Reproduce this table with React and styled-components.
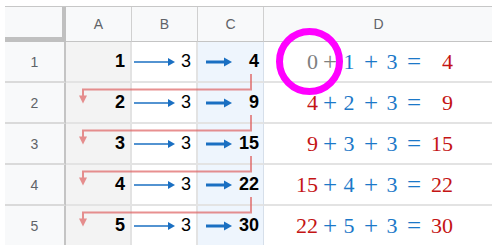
import React from "react";
import styled, { createGlobalStyle } from "styled-components";

const GlobalStyle = createGlobalStyle`
  html, body { margin: 0; padding: 0; background: #ffffff; }
  body { font-family: "Liberation Sans", Arial, sans-serif; }
`;

const Sheet = styled.div`
  position: relative;
  width: 492px;
  height: 249px;
  padding: 6px 0 0 5px;
  box-sizing: border-box;
  overflow: hidden;
`;

const Grid = styled.div`
  display: grid;
  grid-template-columns: 61px 66px 66px 66px 229px;
  grid-template-rows: 35px repeat(4, 41px) 39px;
  border-top: 1px solid #c7c7c7;
`;

const Corner = styled.div`
  background: #f8f9fa;
  border-right: 4px solid #c0c0c0;
  border-bottom: 5px solid #c0c0c0;
  box-sizing: border-box;
`;

const ColHeader = styled.div`
  display: flex;
  align-items: center;
  justify-content: center;
  background: #f8f9fa;
  color: #5f6368;
  font-size: 14px;
  border-bottom: 1px solid #c4c4c4;
  border-right: ${(p) => (p.$last ? "none" : "1px solid #d0d0d0")};
  box-sizing: border-box;
`;

const RowHeader = styled.div`
  display: flex;
  align-items: center;
  justify-content: center;
  background: #f8f9fa;
  color: #5f6368;
  font-size: 14px;
  border-right: 2px solid #c4c4c4;
  border-bottom: ${(p) => (p.$last ? "none" : "2px solid #dadada")};
  box-sizing: border-box;
`;

const Cell = styled.div`
  display: flex;
  align-items: center;
  justify-content: ${(p) => (p.$split ? "space-between" : "flex-end")};
  padding: 0 ${(p) => p.$pr || 5}px 0 ${(p) => p.$pl || 0}px;
  background: ${(p) => p.$bg || "#ffffff"};
  border-right: ${(p) => p.$br || "none"};
  border-bottom: ${(p) => (p.$last ? "none" : "2px solid #e3e3e3")};
  box-sizing: border-box;
  color: #000;
  font-size: 18px;
  font-weight: ${(p) => (p.$bold ? 700 : 400)};
`;

const Formula = styled.div`
  display: grid;
  grid-template-columns: 23px 24px 14px 30px 12px 32px 23px;
  align-items: center;
  padding-left: 31px;
  background: #ffffff;
  border-bottom: ${(p) => (p.$last ? "none" : "2px solid #e3e3e3")};
  box-sizing: border-box;
  font-family: "Liberation Serif", "Times New Roman", serif;
  font-size: 22px;
`;

const tones = { gray: "#808080", blue: "#1c78c8", red: "#c41414" };

const Token = styled.span`
  color: ${(p) => tones[p.$tone]};
  justify-self: ${(p) => (p.$end ? "end" : "center")};
  font-size: ${(p) => (p.$op ? "25px" : "22px")};
  line-height: 1;
`;

const Overlay = styled.svg`
  position: absolute;
  top: 0;
  left: 0;
  pointer-events: none;
`;

const ThinArrow = () => (
  <svg width="41" height="10" viewBox="0 0 41 10">
    <line x1="0" y1="5" x2="35" y2="5" stroke="#1a6fc2" strokeWidth="1.5" />
    <polygon points="34,1 41,5 34,9" fill="#1a6fc2" />
  </svg>
);

const ThickArrow = () => (
  <svg width="26" height="10" viewBox="0 0 26 10">
    <line x1="0" y1="5" x2="19" y2="5" stroke="#1a6fc2" strokeWidth="3" />
    <polygon points="18,0.5 26,5 18,9.5" fill="#1a6fc2" />
  </svg>
);

const rows = [
  { n: 1, a: 1, c: 4, f: [0, 1, 3, 4] },
  { n: 2, a: 2, c: 9, f: [4, 2, 3, 9] },
  { n: 3, a: 3, c: 15, f: [9, 3, 3, 15] },
  { n: 4, a: 4, c: 22, f: [15, 4, 3, 22] },
  { n: 5, a: 5, c: 30, f: [22, 5, 3, 30] },
];

export default function App() {
  const connectors = [0, 1, 2, 3].map((i) => {
    const top = 41 + 41 * i;
    const center = top + 20.5;
    const hy = top + 41 + 7.5;
    return { y0: center + 12.5, hy, tip: hy + 14 };
  });

  return (
    <>
      <GlobalStyle />
      <Sheet>
        <Grid>
          <Corner />
          <ColHeader>A</ColHeader>
          <ColHeader>B</ColHeader>
          <ColHeader>C</ColHeader>
          <ColHeader $last>D</ColHeader>
          {rows.map((r, i) => {
            const last = i === rows.length - 1;
            const first = i === 0;
            return (
              <React.Fragment key={r.n}>
                <RowHeader $last={last}>{r.n}</RowHeader>
                <Cell $bold $bg="#f3f3f3" $br="2px solid #e3e3e3" $last={last}>
                  {r.a}
                </Cell>
                <Cell $split $pl={2} $br="2px solid #e3e3e3" $last={last}>
                  <ThinArrow />
                  <span>3</span>
                </Cell>
                <Cell
                  $split
                  $bold
                  $pl={8}
                  $pr={4}
                  $bg="#eef5fd"
                  $br="1px solid #d6dfea"
                  $last={last}
                >
                  <ThickArrow />
                  <span>{r.c}</span>
                </Cell>
                <Formula $last={last}>
                  <Token $end $tone={first ? "gray" : "red"}>{r.f[0]}</Token>
                  <Token $op $tone={first ? "gray" : "blue"}>+</Token>
                  <Token $tone="blue">{r.f[1]}</Token>
                  <Token $op $tone="blue">+</Token>
                  <Token $tone="blue">{r.f[2]}</Token>
                  <Token $op $tone="blue">=</Token>
                  <Token $end $tone="red">{r.f[3]}</Token>
                </Formula>
              </React.Fragment>
            );
          })}
        </Grid>
        <Overlay width="492" height="249" viewBox="0 0 492 249">
          {connectors.map((c, i) => (
            <g key={i} opacity="0.72">
              <polyline
                points={`251,${c.y0} 251,${c.hy} 83,${c.hy} 83,${c.tip - 7}`}
                fill="none"
                stroke="#e06666"
                strokeWidth="2"
              />
              <polygon
                points={`79,${c.tip - 8} 87,${c.tip - 8} 83,${c.tip}`}
                fill="#e06666"
              />
            </g>
          ))}
          <circle cx="309.5" cy="61.5" r="30" fill="none" stroke="#ff00ff" strokeWidth="7" />
        </Overlay>
      </Sheet>
    </>
  );
}
